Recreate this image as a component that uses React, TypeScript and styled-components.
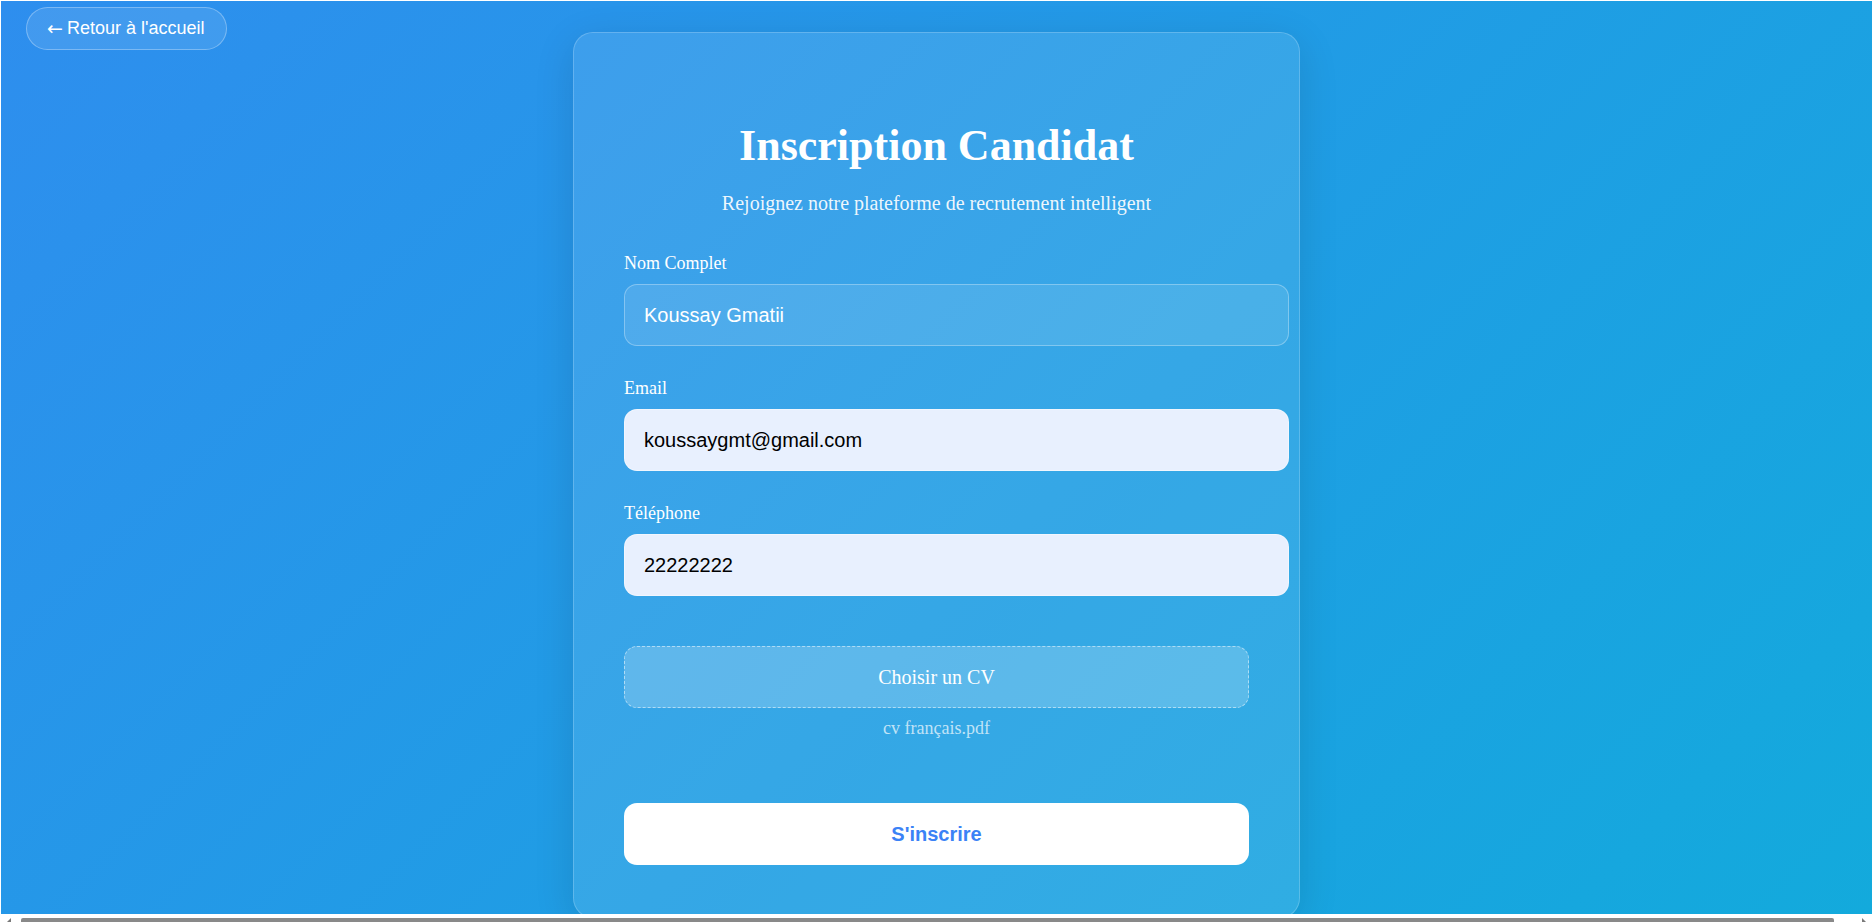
import styled, { createGlobalStyle } from "styled-components";

const GlobalStyle = createGlobalStyle`
  html, body {
    margin: 0;
    padding: 0;
    background: #ffffff;
    overflow: hidden;
  }
  * {
    box-sizing: border-box;
  }
`;

const Frame = styled.div`
  width: 1876px;
  height: 922px;
  padding: 1px 4px 0 1px;
  display: flex;
  flex-direction: column;
  background: #ffffff;
`;

const Viewport = styled.div`
  height: 913px;
  display: grid;
  grid-template-columns: 1fr 727px 1fr;
  align-items: start;
  background: linear-gradient(135deg, #2e8eee 0%, #13aadc 100%);
  font-family: "Liberation Serif", "Times New Roman", serif;
  overflow: hidden;
`;

const BackCell = styled.div`
  padding: 6px 0 0 25px;
`;

const BackButton = styled.button`
  display: inline-flex;
  align-items: center;
  gap: 4px;
  padding: 10px 22px 10px 20px;
  border: 1px solid rgba(255, 255, 255, 0.3);
  border-radius: 999px;
  background: rgba(255, 255, 255, 0.1);
  color: #ffffff;
  font-family: "Liberation Sans", Arial, sans-serif;
  font-size: 18px;
  line-height: 21px;
  cursor: pointer;
`;

const BackArrow = styled.span`
  font-family: "DejaVu Sans", sans-serif;
  font-size: 19px;
  line-height: 21px;
`;

const Card = styled.main`
  margin-top: 31px;
  width: 727px;
  padding: 50px 50px 52px;
  border: 1px solid rgba(255, 255, 255, 0.2);
  border-radius: 20px;
  background: rgba(255, 255, 255, 0.1);
  box-shadow: 0 10px 40px rgba(0, 0, 0, 0.12);
  display: flex;
  flex-direction: column;
`;

const Header = styled.header`
  padding-top: 37px;
  margin-bottom: 37px;
  text-align: center;
  color: #ffffff;
`;

const Title = styled.h1`
  margin: 0;
  font-size: 44px;
  line-height: 52px;
  font-weight: 700;
`;

const Subtitle = styled.p`
  margin: 19px 0 0;
  font-size: 20px;
  line-height: 24px;
  color: rgba(255, 255, 255, 0.92);
`;

const Field = styled.div`
  display: flex;
  flex-direction: column;
  align-items: flex-start;
  margin-bottom: 31px;
`;

const Label = styled.label`
  margin-bottom: 10px;
  font-size: 18px;
  line-height: 22px;
  color: #ffffff;
`;

const Input = styled.input<{ $filled?: boolean }>`
  box-sizing: content-box;
  width: 100%;
  padding: 19px 19px 18px;
  border: 1px solid
    ${({ $filled }) => ($filled ? "rgba(255, 255, 255, 0.4)" : "rgba(255, 255, 255, 0.3)")};
  border-radius: 13px;
  background: ${({ $filled }) => ($filled ? "#e8f0fe" : "rgba(255, 255, 255, 0.1)")};
  color: ${({ $filled }) => ($filled ? "#000000" : "#ffffff")};
  font-family: "Liberation Sans", Arial, sans-serif;
  font-size: 20px;
  line-height: 23px;
  outline: none;
`;

const Upload = styled.div`
  padding-top: 19px;
  display: flex;
  flex-direction: column;
  align-items: center;
`;

const FileButton = styled.label`
  width: 100%;
  padding: 18.5px 0;
  border: 1px dashed rgba(255, 255, 255, 0.5);
  border-radius: 13px;
  background: rgba(255, 255, 255, 0.2);
  color: #ffffff;
  font-size: 20px;
  line-height: 23px;
  text-align: center;
  cursor: pointer;
`;

const FileName = styled.span`
  margin-top: 9px;
  font-size: 18px;
  line-height: 22px;
  color: rgba(255, 255, 255, 0.7);
`;

const Submit = styled.button`
  margin-top: 64px;
  width: 100%;
  padding: 19.5px 0;
  border: none;
  border-radius: 13px;
  background: #ffffff;
  color: #3b82f6;
  font-family: "Liberation Sans", Arial, sans-serif;
  font-size: 20px;
  line-height: 23px;
  font-weight: 700;
  cursor: pointer;
`;

const ScrollBar = styled.div`
  height: 8px;
  display: flex;
  align-items: flex-end;
  background: #ffffff;
`;

const ScrollArrow = styled.div<{ $side: "left" | "right" }>`
  width: ${({ $side }) => ($side === "left" ? "20px" : "38px")};
  height: 4px;
  display: flex;
  justify-content: ${({ $side }) => ($side === "left" ? "flex-start" : "flex-end")};
  padding: 0 6px;
`;

const Thumb = styled.div`
  flex: 1;
  height: 4px;
  border-radius: 2px 2px 0 0;
  background: #898989;
`;

function Arrow({ dir }: { dir: "left" | "right" }) {
  return (
    <svg width="4" height="4" viewBox="0 0 4 4">
      <path d={dir === "left" ? "M4 0 L0 4 L4 4 Z" : "M0 0 L4 4 L0 4 Z"} fill="#7a7a7a" />
    </svg>
  );
}

export default function App() {
  return (
    <>
      <GlobalStyle />
      <Frame>
        <Viewport>
          <BackCell>
            <BackButton>
              <BackArrow>←</BackArrow>
              <span>Retour à l'accueil</span>
            </BackButton>
          </BackCell>

          <Card>
            <Header>
              <Title>Inscription Candidat</Title>
              <Subtitle>Rejoignez notre plateforme de recrutement intelligent</Subtitle>
            </Header>

            <Field>
              <Label>Nom Complet</Label>
              <Input type="text" defaultValue="Koussay Gmatii" />
            </Field>

            <Field>
              <Label>Email</Label>
              <Input $filled type="email" defaultValue="koussaygmt@gmail.com" />
            </Field>

            <Field>
              <Label>Téléphone</Label>
              <Input $filled type="tel" defaultValue="22222222" />
            </Field>

            <Upload>
              <FileButton>Choisir un CV</FileButton>
              <FileName>cv français.pdf</FileName>
            </Upload>

            <Submit type="button">S'inscrire</Submit>
          </Card>

          <div />
        </Viewport>

        <ScrollBar>
          <ScrollArrow $side="left">
            <Arrow dir="left" />
          </ScrollArrow>
          <Thumb />
          <ScrollArrow $side="right">
            <Arrow dir="right" />
          </ScrollArrow>
        </ScrollBar>
      </Frame>
    </>
  );
}
